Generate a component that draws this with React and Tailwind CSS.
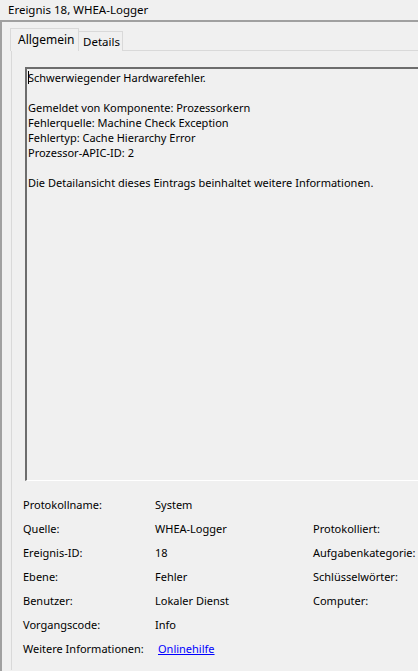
const rows = [
    ["Protokollname:", "System", ""],
    ["Quelle:", "WHEA-Logger", "Protokolliert:"],
    ["Ereignis-ID:", "18", "Aufgabenkategorie:"],
    ["Ebene:", "Fehler", "Schlüsselwörter:"],
    ["Benutzer:", "Lokaler Dienst", "Computer:"],
    ["Vorgangscode:", "Info", ""],
]

const App = () => {
    return (
        <div className="w-[418px] h-[671px] overflow-hidden bg-[#f0f0f0] text-[11px] text-black font-['Noto_Sans',sans-serif]">
            <div className="h-[20px] pl-[8px] leading-[20px] text-[11.5px]">Ereignis 18, WHEA-Logger</div>

            <div className="h-[651px] border-t-2 border-l-2 border-[#a0a0a0] pl-[8px] pt-[6px]">
                {/* tabs */}
                <div className="flex items-end h-[23px]">
                    <div className="h-[23px] w-[69px] border border-b-0 border-[#d9d9d9] bg-[#f0f0f0] pl-[7px] leading-[21px] text-[12px] relative z-10">
                        Allgemein
                    </div>
                    <div className="h-[20px] w-[44px] border border-l-0 border-b-0 border-[#d9d9d9] bg-[#f0f0f0] pl-[4px] leading-[19px] text-[11.5px]">
                        Details
                    </div>
                </div>

                <div className="ml-[1px] -mt-px h-[620px] border-t border-l border-[#d9d9d9] pl-[13px] pt-[16px]">
                    <div className="h-[414px] border-t-2 border-l-2 border-b border-t-[#6d6d6d] border-l-[#6d6d6d] border-b-white pl-[1px] pt-[1px] leading-[15px]">
                        <div className="relative">
                            <span className="absolute left-0 top-[1px] w-px h-[13px] bg-black"></span>
                            <p>Schwerwiegender Hardwarefehler.</p>
                        </div>
                        <p>&nbsp;</p>
                        <p>Gemeldet von Komponente: Prozessorkern</p>
                        <p>Fehlerquelle: Machine Check Exception</p>
                        <p>Fehlertyp: Cache Hierarchy Error</p>
                        <p>Prozessor-APIC-ID: 2</p>
                        <p>&nbsp;</p>
                        <p>Die Detailansicht dieses Eintrags beinhaltet weitere Informationen.</p>
                    </div>

                    <div className="mt-[12px] -ml-[2px] grid grid-cols-[132px_158px_1fr]">
                        {rows.map(([label, value, right]) => (
                            <div key={label} className="contents">
                                <div className="h-[24px] leading-[24px]">{label}</div>
                                <div className="h-[24px] leading-[24px]">{value}</div>
                                <div className="h-[24px] leading-[24px] whitespace-nowrap">{right}</div>
                            </div>
                        ))}
                        <div className="h-[24px] leading-[24px] whitespace-nowrap">Weitere Informationen:</div>
                        <div className="h-[24px] leading-[24px] pl-[3px]">
                            <a href="#" className="text-[#0000ff] underline">Onlinehilfe</a>
                        </div>
                        <div></div>
                    </div>
                </div>
            </div>
        </div>
    )
}

export default App
